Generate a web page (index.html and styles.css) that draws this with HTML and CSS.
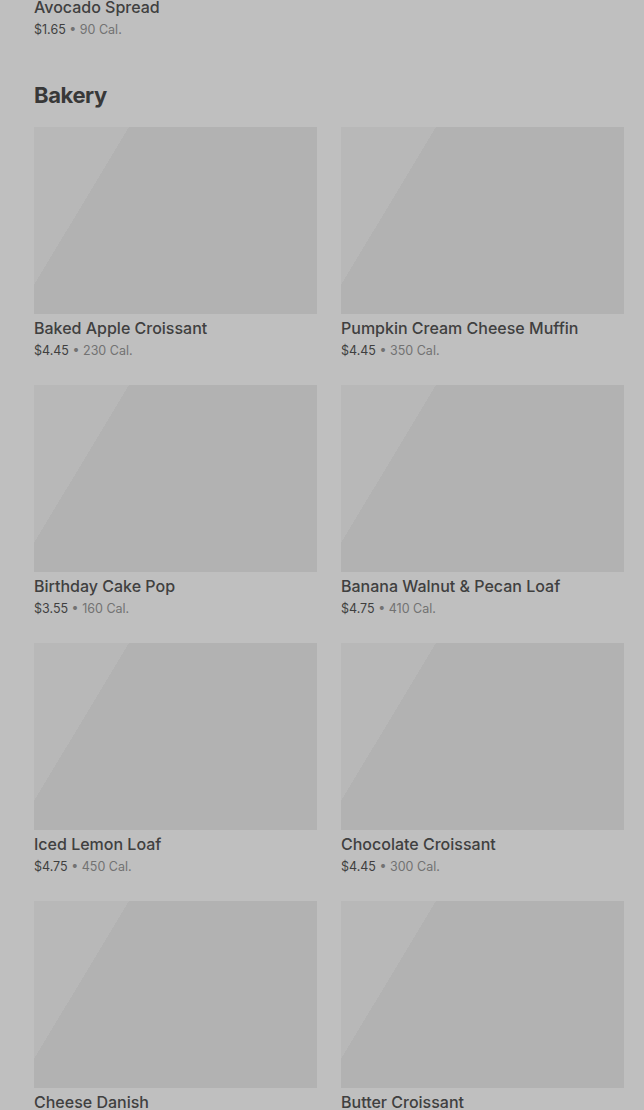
FILE: index.html
```html
<!DOCTYPE html>
<html>
<head>
    <meta charset="UTF-8">
    <title>Menu - Bakery</title>
    <link rel="stylesheet" href="styles.css">
</head>
<body>
    <div class="menu">
        <div class="item item-tail">
            <div class="item-name">Avocado Spread</div>
            <div class="item-meta"><span class="price">$1.65</span> • 90 Cal.</div>
        </div>

        <section class="section">
            <h2 class="section-title">Bakery</h2>
            <div class="grid">
                <div class="item">
                    <div class="thumb"></div>
                    <div class="item-name">Baked Apple Croissant</div>
                    <div class="item-meta"><span class="price">$4.45</span> • 230 Cal.</div>
                </div>
                <div class="item">
                    <div class="thumb"></div>
                    <div class="item-name">Pumpkin Cream Cheese Muffin</div>
                    <div class="item-meta"><span class="price">$4.45</span> • 350 Cal.</div>
                </div>
                <div class="item">
                    <div class="thumb"></div>
                    <div class="item-name">Birthday Cake Pop</div>
                    <div class="item-meta"><span class="price">$3.55</span> • 160 Cal.</div>
                </div>
                <div class="item">
                    <div class="thumb"></div>
                    <div class="item-name">Banana Walnut &amp; Pecan Loaf</div>
                    <div class="item-meta"><span class="price">$4.75</span> • 410 Cal.</div>
                </div>
                <div class="item">
                    <div class="thumb"></div>
                    <div class="item-name">Iced Lemon Loaf</div>
                    <div class="item-meta"><span class="price">$4.75</span> • 450 Cal.</div>
                </div>
                <div class="item">
                    <div class="thumb"></div>
                    <div class="item-name">Chocolate Croissant</div>
                    <div class="item-meta"><span class="price">$4.45</span> • 300 Cal.</div>
                </div>
                <div class="item">
                    <div class="thumb"></div>
                    <div class="item-name">Cheese Danish</div>
                    <div class="item-meta"><span class="price">$3.95</span> • 290 Cal.</div>
                </div>
                <div class="item">
                    <div class="thumb"></div>
                    <div class="item-name">Butter Croissant</div>
                    <div class="item-meta"><span class="price">$3.75</span> • 260 Cal.</div>
                </div>
            </div>
        </section>
    </div>
</body>
</html>
```

FILE: styles.css
```css
html, body {
    margin: 0;
    background: #bfbfbf;
}

body {
    font-family: Inter, "Noto Sans", sans-serif;
    color: #3d3d3d;
    overflow: hidden;
    height: 1110px;
}

.menu {
    padding: 0 20px 0 34px;
    margin-top: -7px;
}

.section {
    margin-top: 39px;
}

.section-title {
    margin: 0 0 16px;
    font-size: 22px;
    line-height: 32px;
    font-weight: 700;
    letter-spacing: -0.4px;
    color: #383838;
}

.grid {
    display: grid;
    grid-template-columns: 1fr 1fr;
    column-gap: 24px;
    row-gap: 24px;
}

.thumb {
    height: 187px;
    background: linear-gradient(121deg, #b8b8b8 0%, #b8b8b8 24%, #b2b2b2 24%, #b2b2b2 100%);
}

.item-name {
    margin-top: 2px;
    font-size: 16px;
    line-height: 24px;
    font-weight: 500;
    color: #404040;
}

.item-meta {
    margin-top: 1px;
    font-size: 12.5px;
    line-height: 20px;
    color: #727272;
}

.price {
    color: #3f3f3f;
}
```
